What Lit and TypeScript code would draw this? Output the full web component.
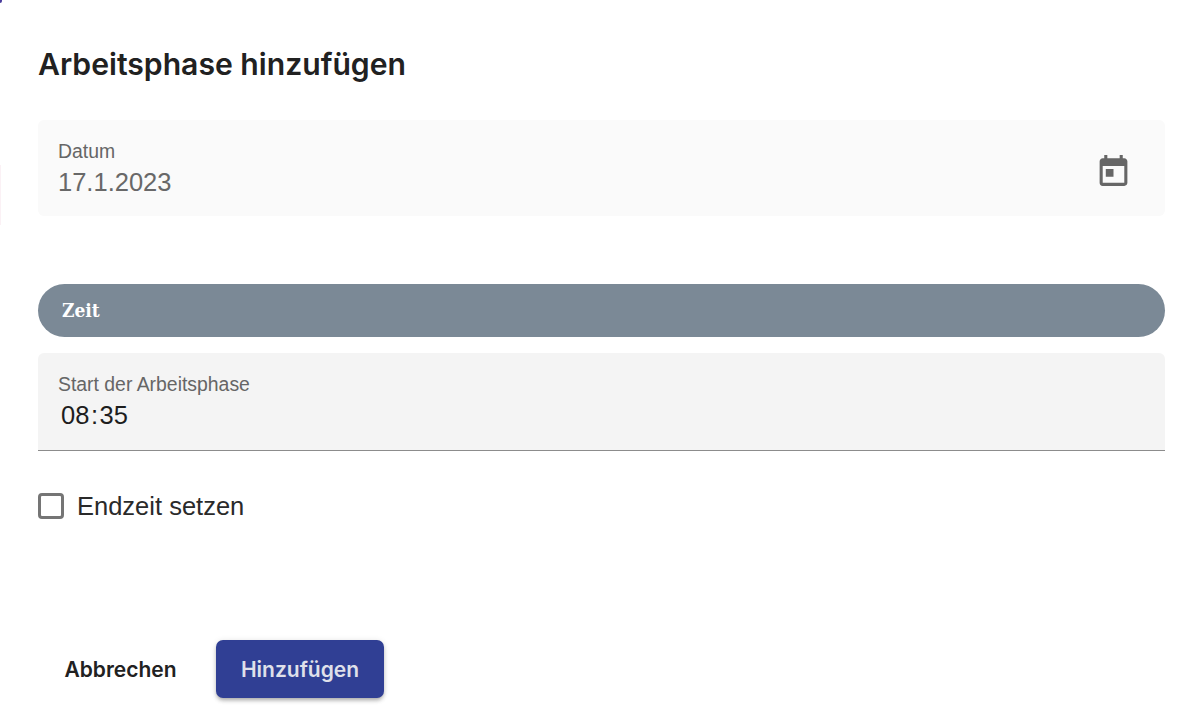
import { LitElement, html, css } from "lit";
import { customElement } from "lit/decorators.js";

@customElement("app-root")
export class AppRoot extends LitElement {
  static styles = css`
    :host {
      display: block;
      position: relative;
      width: 1200px;
      height: 720px;
      background: #fff;
      font-family: "Liberation Sans", Arial, sans-serif;
      overflow: hidden;
    }
    .corner {
      position: absolute;
      left: 0;
      top: 0;
      width: 2px;
      height: 3px;
      background: #4a3d9c;
      border-radius: 0 0 2px 0;
    }
    .edge {
      position: absolute;
      left: 0;
      top: 165px;
      width: 1px;
      height: 60px;
      background: #fbf1f5;
    }
    .dialog {
      box-sizing: border-box;
      height: 720px;
      padding: 45px 35px 22px 38px;
      display: flex;
      flex-direction: column;
    }
    h1 {
      margin: 0;
      font-family: Inter, "Liberation Sans", sans-serif;
      font-size: 30.15px;
      line-height: 38px;
      font-weight: 600;
      color: #212121;
    }
    .field {
      box-sizing: border-box;
      height: 96px;
      border-radius: 6px 6px 0 0;
      padding: 20px 20px 0;
    }
    .date {
      margin-top: 37px;
      background: #fafafa;
      border-radius: 6px;
      display: flex;
      justify-content: space-between;
      align-items: center;
      padding: 0 20px;
    }
    .label {
      font-size: 19.4px;
      line-height: 22px;
      color: #666;
    }
    .value {
      font-size: 25.5px;
      line-height: 30px;
      margin-top: 5px;
      color: #686868;
    }
    .band {
      margin-top: 68px;
      height: 53px;
      border-radius: 27px;
      background: #7b8996;
      color: #fff;
      font-family: "DejaVu Serif Condensed", "DejaVu Serif", serif;
      font-stretch: condensed;
      font-weight: 700;
      font-size: 19px;
      line-height: 53px;
      padding-left: 24px;
    }
    .time {
      margin-top: 16px;
      background: #f4f4f4;
      border-bottom: 1.5px solid #8c8c8c;
      height: 98px;
      padding-top: 20px;
    }
    .time .value {
      color: #1d1d1d;
      padding-left: 3px;
      margin-top: 5px;
    }
    .colon {
      margin: 0 1.5px;
    }
    .check {
      margin-top: 40px;
      display: flex;
      align-items: center;
      gap: 13px;
      font-size: 25.5px;
      line-height: 30px;
      color: #2a2a2a;
    }
    .box {
      box-sizing: border-box;
      width: 26px;
      height: 26px;
      border: 3.5px solid #757575;
      border-radius: 4px;
    }
    .actions {
      margin-top: auto;
      display: flex;
      align-items: center;
      gap: 26px;
    }
    .btn {
      border: 0;
      font-family: Inter, "Liberation Sans", sans-serif;
      font-size: 21px;
      font-weight: 600;
      height: 58px;
      border-radius: 7px;
      background: none;
      padding: 0;
    }
    .cancel {
      color: #212121;
      width: 152px;
      padding-left: 13px;
    }
    .primary {
      width: 168px;
      background: #303f94;
      color: #dfe0ea;
      box-shadow: 0 3px 4px -1px rgba(0, 0, 0, 0.3), 0 1px 6px rgba(0, 0, 0, 0.12);
    }
    .icon {
      width: 37px;
      height: 37px;
      fill: #666;
      display: block;
      margin: 4px 13px 0 0;
    }
  `;

  render() {
    return html`
      <div class="corner"></div>
      <div class="edge"></div>
      <div class="dialog">
        <h1>Arbeitsphase hinzufügen</h1>
        <div class="field date">
          <div>
            <div class="label">Datum</div>
            <div class="value">17.1.2023</div>
          </div>
          <svg class="icon" viewBox="0 0 24 24" aria-hidden="true">
            <path d="M19 4h-1V2h-2v2H8V2H6v2H5c-1.11 0-1.99.9-1.99 2L3 20a2 2 0 0 0 2 2h14c1.1 0 2-.9 2-2V6c0-1.1-.9-2-2-2zm0 16H5V9h14v11zM7 11h5v5H7z" />
          </svg>
        </div>
        <div class="band">Zeit</div>
        <div class="field time">
          <div class="label">Start der Arbeitsphase</div>
          <div class="value">08<span class="colon">:</span>35</div>
        </div>
        <label class="check"><span class="box"></span>Endzeit setzen</label>
        <div class="actions">
          <button class="btn cancel">Abbrechen</button>
          <button class="btn primary">Hinzufügen</button>
        </div>
      </div>
    `;
  }
}
